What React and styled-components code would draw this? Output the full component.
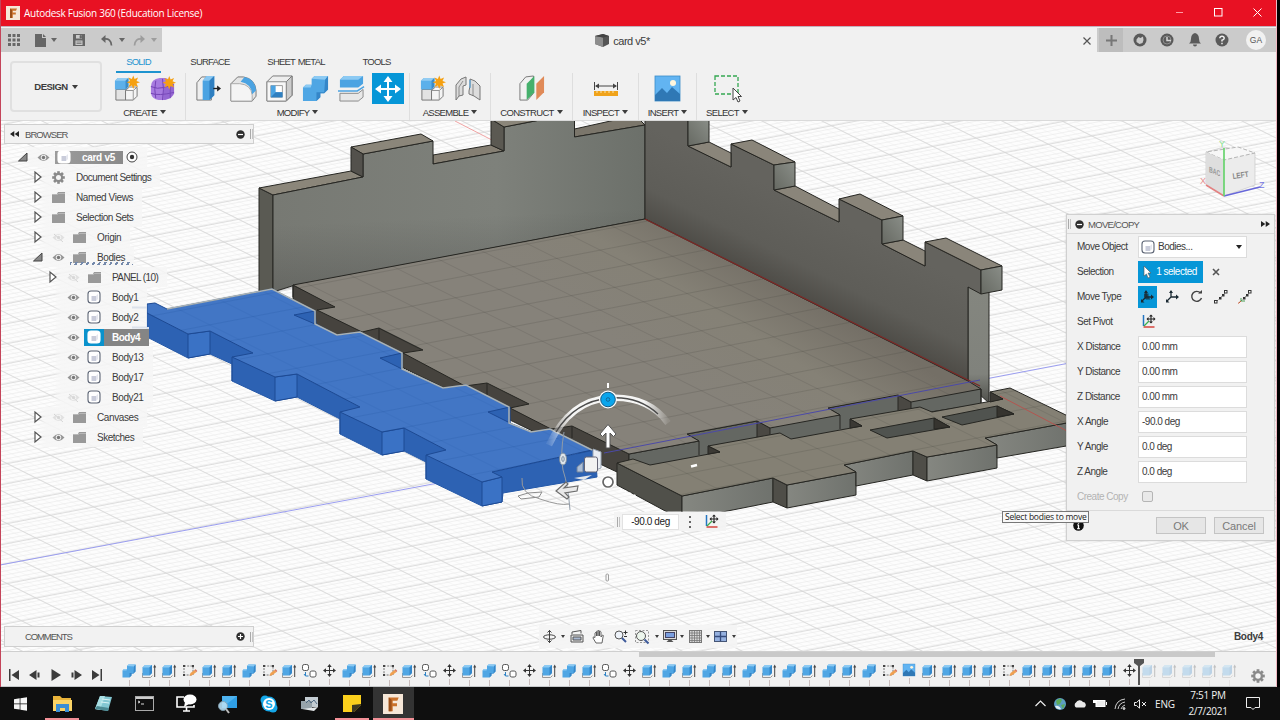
import React from "react";
import styled, { createGlobalStyle, css } from "styled-components";

const Global = createGlobalStyle`
  * { box-sizing: border-box; }
  html, body { margin: 0; padding: 0; background: #000; }
  body { width: 1280px; height: 720px; overflow: hidden; font-family: "Liberation Sans", Arial, sans-serif; font-size: 10px; color: #3c3c3c; }
  svg { display: block; flex: none; overflow: visible; }
`;

/* ---------- frame ---------- */
const Desktop = styled.div`
  width: 1280px; height: 720px; display: grid; grid-template-columns: minmax(0, 1fr); grid-template-rows: 687px 33px; background: #0f0f0f;
`;
const AppWindow = styled.div`
  width: 1277px; display: grid; grid-template-columns: minmax(0, 1fr); grid-template-rows: 27px 25px 69px 530px 36px;
  border-left: 1px solid #c4455a; border-right: 1px solid #f0b8c2; background: #f1f1f1; overflow: hidden;
`;
const WindowWrap = styled.div`background: #000;`;

/* ---------- title bar ---------- */
const TitleBar = styled.header`
  display: flex; align-items: center; background: #e81123; color: #fff; padding: 0 6px 1px 6px; margin: 0 -1px;
  border-bottom: 1px solid #c3b0bc;
`;
const TitleText = styled.span`
  font-family: "Open Sans", "Noto Sans", sans-serif; font-size: 10px; letter-spacing: -0.28px; margin-left: 4px; flex: 1; white-space: nowrap;
`;
const WindowButtons = styled.div`display: flex; gap: 30px; margin-right: 9px; align-items: center;`;

/* ---------- tab strip ---------- */
const TabStrip = styled.div`display: flex; background: #f1f1f1; height: 25px; padding-top: 2px;`;
const QuickBar = styled.div`
  width: 161px; background: #cbcbcb; display: flex; align-items: center; padding-left: 6px; margin-top: -1px;
`;
const Slot = styled.span`
  display: inline-flex; justify-content: center; align-items: center; flex: none;
  width: ${(p) => p.$w}px; height: ${(p) => (p.$h ? p.$h + "px" : "auto")}; opacity: ${(p) => p.$o ?? 1};
  margin-left: ${(p) => (p.$end ? "auto" : 0)};
`;
const DocTab = styled.div`
  flex: 1; display: flex; align-items: center; justify-content: center; position: relative; font-size: 11px; letter-spacing: -0.5px; gap: 4px; padding-right: 14px;
`;
const CloseTab = styled.span`position: absolute; right: 6px; top: 8px;`;
const AccountBar = styled.div`
  width: 179px; background: #cbcbcb; display: flex; align-items: center; margin-top: -1px;
`;
const NewTab = styled.span`
  width: 24px; height: 100%; background: #bdbdbd; display: flex; align-items: center; justify-content: center; margin: 0 3px 0 2px;
`;
const Avatar = styled.span`
  width: 20px; height: 20px; border-radius: 50%; background: #f1f1f1; color: #555; font-size: 8.5px; display: flex; align-items: center; justify-content: center; margin-left: 10px;
`;

/* ---------- ribbon ---------- */
const Ribbon = styled.div`display: flex; background: #f1f1f1; border-bottom: 1px solid #dadada;`;
const DesignButton = styled.button`
  width: 92px; height: 51px; margin: 9px 2px 0 9px; border: 2px solid #e0e0e0; border-radius: 4px; background: #f1f1f1; padding: 0;
  font: bold 9.5px "Liberation Sans", Arial, sans-serif; letter-spacing: -0.5px; color: #3c3c3c; display: flex; align-items: center; justify-content: center; gap: 4px;
`;
const RibbonBody = styled.div`display: flex; flex-direction: column;`;
const Tabs = styled.nav`display: flex; height: 21px; padding-left: 12px;`;
const Tab = styled.span`
  width: ${(p) => p.$w}px; height: 21px; display: flex; justify-content: center; padding-top: 4px; font-size: 9.5px; letter-spacing: -0.8px; word-spacing: 1px; color: #3a3a3a; white-space: nowrap;
  ${(p) => p.$active && css`color: #1d93cf; border-bottom: 2px solid #1d93cf;`}
`;
const Groups = styled.div`display: flex; height: 47px;`;
const Group = styled.section`
  width: ${(p) => p.$w}px; display: flex; flex-direction: column; align-items: center; position: relative;
  border-right: 1px solid ${(p) => (p.$last ? "transparent" : "#dedede")};
`;
const GroupIcons = styled.div`display: flex; height: 31px;`;
const IconCell = styled.span`
  width: 36px; height: 31px; display: flex; align-items: center; justify-content: center;
`;
const ActiveTool = styled.span`width: 32px; height: 31px; background: #0696d7; display: flex; align-items: center; justify-content: center;`;
const GroupLabel = styled.span`
  display: flex; align-items: center; gap: 3px; font-size: 9.5px; letter-spacing: -0.7px; margin-top: 2px; height: 12px; white-space: nowrap; color: #333;
`;
const Caret = styled.i`
  width: 0; height: 0; border: ${(p) => p.$s || 3}px solid transparent; border-top: ${(p) => (p.$s || 3) + 1}px solid ${(p) => p.$c || "#3c3c3c"}; border-bottom: 0; display: inline-block; flex: none;
  margin-left: ${(p) => (p.$end ? "auto" : p.$pull ? "-14px" : 0)};
`;

/* ---------- viewport ---------- */
const Viewport = styled.main`position: relative; background: #fcfcfc; overflow: hidden;`;
const Canvas = styled.svg`position: absolute; left: -1px; top: 0;`;
const LeftDock = styled.aside`
  position: absolute; inset: 3px auto 4px 3px; width: 250px; display: flex; flex-direction: column; justify-content: space-between; align-items: stretch;
`;
const DockBar = styled.div`
  height: ${(p) => p.$h}px; border: 1px solid #cfcfcf; background: #f2f2f2; display: flex; align-items: center; color: #555; font-size: 9.5px; letter-spacing: -0.95px;
`;
const Grip = styled.i`width: 3px; height: 10px; border-left: 1px solid #aaa; border-right: 1px solid #c4c4c4;`;
const Tree = styled.div`display: flex; flex-direction: column; margin-top: 3px;`;
const TreeRow = styled.div`
  height: 20px; display: flex; align-items: center; align-self: flex-start; padding-left: ${(p) => p.$pad}px; padding-right: ${(p) => (p.$tight ? 0 : 9)}px;
  background: linear-gradient(90deg, transparent ${(p) => p.$pad + 10}px, rgba(246,246,246,.86) ${(p) => p.$pad + 18}px);
  white-space: nowrap;
`;
const Label = styled.span`margin-left: ${(p) => p.$ml ?? 7}px; letter-spacing: ${(p) => p.$ls ?? -0.4}px;`;
const RootChip = styled.span`
  height: 13px; width: 68px; background: linear-gradient(90deg, #9b9b9b, #8a8a8a); color: #fff; font-weight: bold; display: flex; align-items: center; padding-left: 2px; margin-left: 2px; margin-right: 3px;
`;
const SelectedChip = styled.span`
  height: 17px; display: flex; align-items: center; background: #858585; color: #fff; font-weight: bold; width: 65px; margin-left: 1px;
`;
const SelectedIcon = styled.span`width: 20px; height: 17px; background: #0a92cc; display: flex; align-items: center; justify-content: center;`;

/* ---------- command panel ---------- */
const Panel = styled.section`
  position: absolute; left: 1065px; top: 93px; width: 209px; height: 327px; background: #f1f1f1; border: 1px solid #d0d0d0; display: flex; flex-direction: column; box-shadow: 0 0 2px rgba(0,0,0,.15);
`;
const PanelHead = styled.div`
  height: 19px; border-bottom: 1px solid #dadada; display: flex; align-items: center; justify-content: space-between; color: #555; padding: 0 4px 0 1px;
`;
const PanelTitle = styled.span`display: flex; align-items: center; gap: 3px; font-size: 9.5px; letter-spacing: -0.7px;`;
const PanelRow = styled.div`
  height: 25px; display: flex; align-items: center; padding-left: 10px; letter-spacing: -0.5px; color: ${(p) => (p.$off ? "#b3b3b3" : "#3c3c3c")};
`;
const RowLabel = styled.span`width: 61px; flex: none; letter-spacing: -0.5px; white-space: nowrap;`;
const Field = styled.span`
  width: 109px; height: 22px; border: 1px solid #dcdcdc; background: #fff; padding: 0 4px 0 3px; display: flex; align-items: center; gap: 3px;
`;
const BodyField = styled(Field)`padding-left: 2px;`;
const Chosen = styled.span`width: 65px; height: 22px; background: #0696d7; color: #fff; display: flex; align-items: center; justify-content: center; gap: 4px;`;
const TypeButton = styled.span`
  width: ${(p) => (p.$on ? 19 : 24.4)}px; height: 22px; display: flex; align-items: center; justify-content: center; background: ${(p) => (p.$on ? "#0696d7" : "transparent")}; margin-right: ${(p) => (p.$on ? 3 : 0)}px;
`;
const CheckBox = styled.i`width: 11px; height: 11px; border: 1px solid #b5b5b5; border-radius: 2px; background: #e9e9e9; margin-left: 4px;`;
const PanelFoot = styled.div`
  flex: 1; border-top: 1px solid #dadada; display: flex; align-items: center; padding: 0 10px 0 6px; margin-top: 1px; justify-content: space-between;
`;
const FootButtons = styled.div`display: flex; gap: 8px;`;
const PanelButton = styled.button`
  width: 50px; height: 17px; padding: 0; border: 1px solid #c4c4c4; background: #e6e6e6; color: #7a7a7a; font: 11px "Liberation Sans", Arial, sans-serif; letter-spacing: -0.1px;
`;
const Hint = styled.span`
  position: absolute; left: 1001px; top: 390px; width: 87px; height: 12px; border: 1px solid #777; background: #f8f8f8; color: #222; font: 8.5px/10px "Open Sans", sans-serif; letter-spacing: -0.25px; padding-left: 2px; white-space: nowrap;
`;
const FloatInput = styled.div`
  position: absolute; left: 613px; top: 391px; height: 19px; display: flex; align-items: center; background: rgba(243,243,243,.92); padding: 0 5px 0 3px; color: #222; letter-spacing: -0.4px;
`;
const FloatField = styled.span`width: 57px; height: 16px; background: #fff; border: 1px solid #e2e2e2; display: flex; align-items: center; justify-content: center; margin-left: 2px;`;
const NavBar = styled.div`
  position: absolute; left: 538px; top: 504px; height: 23px; display: flex; align-items: center; background: rgba(244,244,244,.9);
`;
const StatusName = styled.span`position: absolute; right: 13px; top: 510px; font-weight: bold; letter-spacing: -0.3px; font-size: 10px;`;

/* ---------- timeline ---------- */
const Timeline = styled.footer`background: #f1f1f1; display: flex; flex-direction: column; border-bottom: 1px solid #c6c9cb;`;
const ScrollTrack = styled.div`height: 6px; border-top: 1px solid #cfcfcf;`;
const ScrollThumb = styled.div`height: 5px; width: 576px; margin-left: 638px; background: #c9c9c9;`;
const TimelineRow = styled.div`display: flex; flex: 1; align-items: flex-start;`;
const Playback = styled.div`display: flex; flex: none; width: 118px; padding: 12px 0 0 3px;`;
const Features = styled.div`display: flex; flex: none;`;
const Feature = styled.span`
  width: 20px; height: 29px; display: flex; flex-direction: column; align-items: center; padding-top: 7px; opacity: ${(p) => (p.$off ? 0.28 : 1)};
  &::after { content: ""; width: 1px; height: 6px; margin-top: 2px; background: #c9bdbd; }
`;
const Marker = styled.span`width: 0; height: 29px; display: flex; justify-content: center;`;

/* ---------- taskbar ---------- */
const Taskbar = styled.div`display: flex; background: #0f0f0f; color: #f2f2f2; font-family: "Open Sans", "Noto Sans", sans-serif;`;
const Task = styled.span`
  width: 41.4px; height: 33px; display: flex; align-items: center; justify-content: center; position: relative; background: ${(p) => (p.$active ? "#333" : "transparent")};
  ${(p) => p.$open && css`&::after { content: ""; position: absolute; bottom: 0; height: 2px; left: ${p.$active ? 0 : 4}px; right: ${p.$active ? 0 : 4}px; background: #f29097; }`}
`;
const Tray = styled.div`margin-left: auto; display: flex; align-items: center; padding-right: 15px;`;
const Language = styled(Slot)`font-size: 10px; letter-spacing: -0.2px;`;
const Clock = styled.span`width: 54px; text-align: center; font-size: 10px; line-height: 15.5px; letter-spacing: -0.3px; margin-left: 1px; margin-right: 6px;`;

/* ---------- icon drawings ---------- */
const F = ({ s, bg = "#f6e7d8", c = "#c9712b" }) => (
  <svg width={s} height={s} viewBox="0 0 14 14"><rect width="14" height="14" fill={bg} /><path d="M4 2.5h7l-1 2.2H6.8v1.8h3v2h-3V12H4z" fill={c} /><path d="M4 2.5 6 4v8H4z" fill="#9b4f19" /></svg>
);
const Star = ({ x, y }) => (
  <g transform={`translate(${x} ${y})`}><path d="M0-7 1.4-3.4 5-5 3.4-1.4 7 0 3.4 1.4 5 5 1.4 3.4 0 7-1.4 3.4-5 5-3.4 1.4-7 0-3.4-1.4-5-5-1.4-3.4z" fill="#f5a011" /></g>
);
const NewComponent = () => (
  <svg width="27" height="27" viewBox="0 0 28 28" strokeWidth="1" strokeLinejoin="round">
    <path d="M3 15 3 26h10V15z" fill="#e3e3e3" stroke="#777" /><path d="M13 15v11h8l4-4V13h-8z" fill="#f4f4f4" stroke="#777" />
    <path d="M13 16 17 12.5H25L21 16z" fill="#fff" stroke="#888" /><path d="M21 16v10" stroke="#999" />
    <path d="M2 6 5 3h11v9l-3 3H2z" fill="#5cb0ea" /><path d="M2 6 5 3h11l-3 3z" fill="#93ccf2" /><path d="M13 6l3-3v9l-3 3z" fill="#3b8cc9" /><Star x={21} y={7.5} />
  </svg>
);
const FormTool = () => (
  <svg width="27" height="27" viewBox="0 0 28 28"><path d="M2 12Q2 4 11 3h6q8 2 9 8v8q-1 5-9 7h-7Q3 25 2 19z" fill="#a77be0" /><path d="M2 12q7 3 13 1l11-3M14 4q2 11 0 22M7 6q-2 9 0 18M22 12v12M2 19q8 3 24-1" fill="none" stroke="#7343b4" /><path d="M15 13v13l7-2 4-5v-8z" fill="#7f50c2" opacity=".45" /><Star x={21} y={8} /></svg>
);
const PressPull = () => (
  <svg width="27" height="27" viewBox="0 0 28 28"><path d="M3 8 8 2h10v24H3z" fill="#eee" stroke="#777" /><path d="M9 6 13 1h8v20l-5 5H9z" fill="#4ba3e2" /><path d="M9 6 13 1h8l-5 5z" fill="#88c6f1" /><path d="M16 6l5-5v20l-5 5z" fill="#2f7fc0" /><path d="M20 14h5" stroke="#222" strokeWidth="1.4" /><path d="M24 11l4 3-4 3z" fill="#222" /></svg>
);
const Fillet = () => (
  <svg width="27" height="27" viewBox="0 0 28 28"><path d="M1 9 8 2h6q12 2 13 14v6l-4 5H1z" fill="#e4e4e4" stroke="#777" /><path d="M1 9h9q12 1 13 12v6H1z" fill="#f4f4f4" stroke="#999" strokeWidth=".8" /><path d="M11 7 15 2q11 2 12 14l-4 4Q22 9 11 7z" fill="#4ba3e2" /></svg>
);
const Shell = () => (
  <svg width="27" height="27" viewBox="0 0 28 28"><path d="M1 7 7 1h20v20l-6 6H1z" fill="#eee" stroke="#777" /><path d="M21 7l6-6v20l-6 6z" fill="#ccc" stroke="#777" /><path d="M1 7h20v20H1z" fill="#f7f7f7" stroke="#888" /><path d="M5 11h12v12H5z" fill="#fff" stroke="#999" /><path d="M5 11h5v7h7v5H5z" fill="#4ba3e2" /><path d="M5 23 10 18h7v5z" fill="#2f7fc0" /></svg>
);
const Combine = ({ s = 27 }) => (
  <svg width={s} height={s} viewBox="0 0 28 28"><path d="M1 13 4 10h6V4l3-3h14v14l-4 4h-4v4l-4 4H1z" fill="#4fa6e4" /><path d="M1 13 4 10h6l-1 3zM10 4l3-3h14l-3 4z" fill="#8ccaf3" /><path d="M24 5l3-4v14l-4 4h-4v4l-4 4v-9h8z" fill="#3586c8" /></svg>
);
const Split = () => (
  <svg width="27" height="27" viewBox="0 0 28 28"><path d="M2 5 6 1h20v8l-5 4H2z" fill="#4ba3e2" /><path d="M2 5 6 1h20l-5 4z" fill="#8ccaf3" /><path d="M0 16.5h20L27 12" fill="none" stroke="#4ba3e2" strokeWidth="1.5" /><path d="M2 19h19l5-4v8l-5 4H2z" fill="#e8e8e8" stroke="#888" /></svg>
);
const MoveGlyph = ({ s = 26, c = "#fff" }) => (
  <svg width={s} height={s} viewBox="0 0 26 26" fill={c}><path d="M12 5h2v16h-2zM5 12h16v2H5z" /><path d="M13 0 17.5 6h-9zM13 26 17.5 20h-9zM0 13 6 8.500v9zM26 13 20 8.500v9z" /></svg>
);
const Joint = () => (
  <svg width="26" height="26" viewBox="0 0 26 26" fill="#dcdcdc" stroke="#777"><path d="M1 24V9L6 3l5-2v8l-3 1v9l-4 1z" /><path d="M4 20V11l4-6" fill="none" strokeWidth=".8" /><path d="M25 24V10L20 5l-5-2v7l-1 5v3l5 2z" /><path d="M18 8v12" strokeWidth=".8" /><path d="M15 4v8" stroke="#4ba3e2" /></svg>
);
const Construct = () => (
  <svg width="27" height="27" viewBox="0 0 28 28"><path d="M2 9 8 2l8-1v18l-6 7H2z" fill="#f1f1f1" stroke="#777" /><path d="M9 9 17 1v17l-8 8z" fill="#45b06c" /><path d="M19 9l8-8v17l-8 8z" fill="#e08a58" /></svg>
);
const Inspect = () => (
  <svg width="26" height="26" viewBox="0 0 26 26"><rect x="1" y="15" width="24" height="5" fill="#f0a31b" /><path d="M4 15v2M8 15v2M12 15v2M16 15v2M20 15v2" stroke="#fff3d0" strokeWidth=".8" /><path d="M1.500 6v8M24.500 6v8M3 10h20" stroke="#444" /><path d="M2 10l4-2.500v5zM24 10l-4-2.500v5z" fill="#444" /></svg>
);
const Picture = ({ s = 25 }) => (
  <svg width={s} height={s} viewBox="0 0 25 25"><rect width="25" height="25" fill="#62b4f2" stroke="#3b8cc9" strokeWidth=".8" /><circle cx="18" cy="7" r="3" fill="#fff6dd" /><path d="M0 19 7 12l5 5 5-6 8 7v7H0z" fill="#2f78b5" /></svg>
);
const SelectTool = () => (
  <svg width="28" height="30" viewBox="0 0 28 30"><rect x="2" y="2" width="23" height="18" fill="none" stroke="#35a852" strokeWidth="1.300" strokeDasharray="4 2" /><path d="M20 14v12l3-2.500 2 4.500 2-1-2-4.500h3.500z" fill="#fff" stroke="#444" /></svg>
);
const Eye = ({ off }) => (
  <svg width="13" height="9" viewBox="0 0 13 9" opacity={off ? 0.22 : 1}><path d="M.5 4.500Q6.500-2.500 12.500 4.500 6.500 11.500.5 4.500z" fill="#959595" /><circle cx="6.500" cy="4.500" r="2.700" fill="#eee" /><circle cx="6.500" cy="4.500" r="1.700" fill="#777" />{off && <path d="M2 1l9 8" stroke="#666" />}</svg>
);
const Folder = () => <svg width="13" height="11" viewBox="0 0 13 11"><path d="M0 2h5l1-2h7v11H0z" fill="#999" /><path d="M0 2.500h5.500l1-1H13" stroke="#c4c4c4" strokeWidth=".7" fill="none" /></svg>;
const BodyIcon = ({ sel }) => <svg width="14" height="14" viewBox="0 0 14 14"><rect x="1" y="1" width="12" height="12" rx="3" fill="#fff" stroke={sel ? "#fff" : "#5d6575"} strokeWidth="1.100" /><path d="M4.500 6h4.500v5h-4.500z" fill="#c9ccda" /><path d="M9 6l2-2v5l-2 2z" fill="#e4e6ee" /></svg>;
const Gear = ({ s = 13, c = "#8a8a8a" }) => (
  <svg width={s} height={s} viewBox="-7 -7 14 14"><g fill={c}>{[0, 45, 90, 135].map((a) => <rect key={a} x="-1.400" y="-6.800" width="2.800" height="13.600" transform={`rotate(${a})`} />)}<circle r="5" /></g><circle r="2.700" fill="#f4f4f4" /></svg>
);
const Arrow = ({ open }) => open
  ? <svg width="10" height="10" viewBox="0 0 10 10"><path d="M9 1v8H.5z" fill="#888" stroke="#444" /></svg>
  : <svg width="8" height="12" viewBox="0 0 8 12"><path d="M1 1v10l6-5z" fill="#fff" stroke="#555" strokeWidth="1.200" /></svg>;
const Dot = ({ plus }) => <svg width="9" height="9" viewBox="0 0 9 9"><circle cx="4.500" cy="4.500" r="4.200" fill="#2e2e2e" /><path d={plus ? "M2 4.500h5M4.500 2v5" : "M2 4.500h5"} stroke="#fff" strokeWidth="1.200" /></svg>;
const Chevrons = ({ back }) => <svg width="9" height="6" viewBox="0 0 9 6" fill="#222"><path d={back ? "M4.300 0v6L0 3zM9 0v6L4.700 3z" : "M0 0v6l4.300-3zM4.700 0v6L9 3z"} /></svg>;
const Pivot = () => (
  <svg width="13" height="13" viewBox="0 0 13 13"><path d="M1.500 0v11" stroke="#2476c2" strokeWidth="1.500" /><path d="M1.500 12h11" stroke="#d6443c" strokeWidth="1.500" /><path d="M2 11l5-5" stroke="#3eae4e" strokeWidth="1.200" /><path d="M9 .5v7M5.500 4h7" stroke="#222" strokeWidth="1.100" /><path d="M9-.5l2 2H7zM9 8.500l2-2H7zM4.500 4l2-2v4zM13.500 4l-2-2v4z" fill="#222" /></svg>
);
const FreeMove = ({ all }) => (
  <svg width="13" height="13" viewBox="0 0 13 13"><path d="M5 1v6h7M5 7l-4 4" fill="none" stroke="#1b2a33" strokeWidth="1.300" /><path d="M3 3l2-3 2 3zM10 4.500l3 2.500-3 2.500zM0 9v3.500h3.500z" fill="#1b2a33" />{all && <path d="M3 7V3.500h4.500V7l2 2.500H5" fill="#1b2a33" opacity=".75" />}</svg>
);
const RotateIcon = () => <svg width="13" height="13" viewBox="0 0 13 13"><path d="M10.500 3A5 5 0 1 0 11.500 8" fill="none" stroke="#444" strokeWidth="1.400" /><path d="M8 3.500h4V0z" fill="#444" /></svg>;
const PointMove = ({ axes }) => (
  <svg width="14" height="14" viewBox="0 0 14 14"><path d="M3 11 11 3" stroke="#555" strokeDasharray="2 1" strokeWidth=".8" /><rect x="10.500" y=".5" width="2.500" height="2.500" fill="#fff" stroke="#333" /><path d="M8 4h2.500v2.500H8zM5 7h2.500v2.500H5z" fill="#333" />{axes ? <path d="M3 8v3h4M3 11l-2 2" fill="none" stroke="#4d9f55" /> : <rect x=".5" y="10.500" width="2.500" height="2.500" fill="#fff" stroke="#333" />}{axes && <path d="M0 13.500l3-2.500" stroke="#d65a3c" />}</svg>
);
const Extrude = () => (
  <svg width="14" height="14" viewBox="0 0 14 14"><path d="M.5 9v4.500h8l2-2" fill="#eee" stroke="#999" /><path d="M.5 3.500 3 1h7v8l-2.500 2.500h-7z" fill="#4fa6e4" /><path d="M.5 3.500 3 1h7L7.500 3.500z" fill="#8ccaf3" /><path d="M7.500 3.500 10 1v8l-2.500 2.500z" fill="#3586c8" /><path d="M12.700 2v11" stroke="#444" /><path d="M11.200 3.500l1.500-3 1.500 3z" fill="#444" /></svg>
);
const SketchIcon = () => (
  <svg width="14" height="14" viewBox="0 0 14 14"><path d="M2 2h9v9H2z" fill="none" stroke="#777" strokeDasharray="2 1.200" /><path d="M1 1h2v2H1zM10 1h2v2h-2zM1 10h2v2H1z" fill="#444" /><path d="M7.500 12l1-3 4-3 2 2-4 3z" fill="#f0a050" /><path d="M12.500 6l2 2 .8-1-1.600-1.700z" fill="#d46b52" /></svg>
);
const Pattern = () => (
  <svg width="14" height="14" viewBox="0 0 14 14" fill="#fff" stroke="#555"><rect x=".5" y=".5" width="6" height="6" rx="1.800" /><rect x="8" y="7" width="6" height="6" rx="1.800" /><path d="M3.500 8v4h3M2 10l1.500 2" stroke="#2f82c4" fill="none" /></svg>
);
const featureIcons = { C: <Combine s={14} />, E: <Extrude />, S: <SketchIcon />, J: <Pattern />, M: <MoveGlyph s={13} c="#333" />, I: <Picture s={12} /> };

const Play = ({ kind }) => (
  <svg width="12" height="12" viewBox="0 0 12 12" fill="#3c3c3c">
    {kind === "first" && <path d="M1 0h1.500v12H1zM11 1v10L3.500 6z" />}
    {kind === "prev" && <path d="M7.500 1v10L0 6zM8.500 3.500h2v5h-2z" />}
    {kind === "play" && <path d="M1.500 0v12L11 6z" />}
    {kind === "next" && <path d="M4.500 1v10L12 6zM1.500 3.500h2v5h-2z" />}
    {kind === "last" && <path d="M9.500 0H11v12H9.500zM1 1v10L8.500 6z" />}
  </svg>
);

/* ---------- 3D scene ---------- */
const pts = (a) => a.map((p) => p.join(",")).join(" ");
const Poly = ({ p, f, s = "#262622", w = 1 }) => <polygon points={pts(p)} fill={f} stroke={s} strokeWidth={w} strokeLinejoin="round" />;

const gridPath = (fall, start, end, step) => {
  let d = "";
  for (let c = start; c < end; c += step) d += `M0 ${c.toFixed(1)}L1280 ${(c + fall).toFixed(1)}`;
  return d;
};
const GRID = {
  aMinor: gridPath(640, -560, 680, 6), aMajor: gridPath(640, -560, 680, 30),
  bMinor: gridPath(-245, 120, 920, 4), bMajor: gridPath(-245, 125, 920, 20),
};

const FLOOR = [[645, 219], [968, 381], [981, 389], [911, 402], [898, 395], [828, 408], [840, 415], [770, 428], [757, 421], [687, 434], [699, 441], [629, 454], [572, 426], [551, 429], [510, 408], [529, 404], [487, 383], [465, 386], [403, 353], [423, 350], [379, 328], [362, 332], [317, 310], [335, 307], [293, 285]];
const SLAB = [[617, 463], [633, 459], [650, 465], [720, 452], [708, 446], [780, 433], [791, 439], [862, 426], [850, 419], [920, 407], [932, 412], [1003, 399], [990, 392], [1010, 388], [1072, 418], [1072, 422], [985, 438], [997, 445], [927, 457], [913, 451], [844, 465], [856, 472], [787, 485], [773, 478], [682, 496]];
const BLUE_TOP = [[147, 304], [155, 303], [167, 309], [272, 289], [315, 311], [316, 324], [337, 335], [360, 332], [402, 353], [402, 369], [443, 388], [466, 385], [509, 407], [510, 423], [531, 432], [550, 429], [592, 450], [492, 472], [502, 477], [482, 482], [426, 455], [446, 450], [404, 428], [382, 432], [340, 412], [360, 407], [297, 374], [275, 377], [232, 357], [253, 353], [210, 331], [188, 334], [147, 313]];
const BLUE_SIDE = [[147, 313], [188, 334], [210, 331], [253, 353], [275, 377], [297, 374], [360, 407], [382, 432], [404, 428], [446, 450], [482, 482], [492, 472], [595, 450], [597, 477], [503, 493], [502, 502], [482, 506], [426, 479], [426, 462], [404, 451], [382, 455], [340, 434], [340, 419], [297, 397], [275, 401], [232, 381], [232, 364], [210, 354], [188, 358], [147, 337]];

const Scene = () => (
  <Canvas width="1280" height="530" viewBox="0 121 1280 530">
    <defs>
      <clipPath id="model"><rect x="0" y="121" width="1280" height="390.500" /></clipPath>
      <clipPath id="floor"><polygon points={pts(FLOOR)} /></clipPath>
      <clipPath id="slab"><polygon points={pts(SLAB)} /></clipPath>
      <clipPath id="blue"><polygon points={pts(BLUE_TOP)} /></clipPath>
      <linearGradient id="wl" x1="0" x2="1"><stop offset="0" stopColor="#777973" /><stop offset=".6" stopColor="#7e817b" /><stop offset="1" stopColor="#6c706a" /></linearGradient>
      <linearGradient id="wls" x1=".45" y1="0" x2=".55" y2="1"><stop offset=".55" stopColor="#333" stopOpacity="0" /><stop offset="1" stopColor="#333" stopOpacity=".28" /></linearGradient>
      <linearGradient id="wr" gradientUnits="userSpaceOnUse" x1="830" y1="215" x2="788" y2="300"><stop offset="0" stopColor="#64635e" /><stop offset=".6" stopColor="#5e5d58" /><stop offset="1" stopColor="#4a4843" /></linearGradient>
      <linearGradient id="fl" gradientUnits="userSpaceOnUse" x1="800" y1="290" x2="725" y2="410"><stop offset="0" stopColor="#746f66" /><stop offset=".45" stopColor="#858176" /><stop offset="1" stopColor="#86827a" /></linearGradient>
      <linearGradient id="face" x1="0" x2="1"><stop offset="0" stopColor="#858781" /><stop offset="1" stopColor="#6f726d" /></linearGradient>
      <linearGradient id="tooth" x1="0" x2="1" y1="1" y2="0"><stop offset="0" stopColor="#666962" /><stop offset="1" stopColor="#8a8e88" /></linearGradient>
      <linearGradient id="pillar" x1="0" x2="0" y1="0" y2="1"><stop offset="0" stopColor="#84867f" /><stop offset=".75" stopColor="#80827c" /><stop offset="1" stopColor="#4f504b" /></linearGradient>
      <linearGradient id="arc" gradientUnits="userSpaceOnUse" x1="548" y1="0" x2="668" y2="0"><stop offset="0" stopColor="#fff" stopOpacity=".1" /><stop offset=".2" stopColor="#fff" /><stop offset=".8" stopColor="#fff" /><stop offset="1" stopColor="#fff" stopOpacity=".1" /></linearGradient>
    </defs>
    <rect y="121" width="1280" height="530" fill="#fdfdfd" />
    <g fill="none">
      <path d={GRID.aMinor} stroke="#f3f3f3" strokeWidth=".7" /><path d={GRID.bMinor} stroke="#ebebeb" strokeWidth=".7" />
      <path d={GRID.aMajor} stroke="#d4d4d4" strokeWidth=".8" /><path d={GRID.bMajor} stroke="#d6d6d6" strokeWidth=".8" />
      <path d="M455 121 645 219" stroke="#f0a3a3" /><path d="M0 565 620 449M980 380 1080 361" stroke="#9a9df0" />
    </g>
    <g clipPath="url(#model)">
      {/* left wall */}
      <Poly p={[[259, 188], [273, 195], [273, 300], [259, 296]]} f="#5a5a53" />
      <Poly p={[[259, 188], [351, 171], [363, 177], [273, 195]]} f="#8b867a" />
      <Poly p={[[433, 155], [491, 145], [504, 151], [433, 164]]} f="#857f73" />
      <Poly p={[[574.5, 129], [615, 120], [640, 120], [645, 125], [574.5, 137]]} f="#7b766b" />
      <polygon points={pts([[273, 195], [363, 177], [363, 154], [433, 141], [433, 164], [504, 151], [504, 127], [540, 120], [574.5, 120], [574.5, 137], [645, 125], [645, 219], [292, 286], [273, 292]])} fill="url(#wl)" stroke="#262622" />
      <polygon points={pts([[273, 195], [645, 125], [645, 219], [273, 292]])} fill="url(#wls)" />
      <Poly p={[[351, 147], [421, 134], [433, 141], [363, 154]]} f="#8b867a" />
      <Poly p={[[351, 147], [363, 154], [363, 177], [351, 171]]} f="#53514c" />
      <Poly p={[[491, 119], [504, 127], [504, 151], [491, 145]]} f="#5b5952" />
      <Poly p={[[491, 119], [545, 119], [504, 127]]} f="#8b867a" />
      {/* right wall */}
      <Poly p={[[968, 287], [989, 287], [989, 403], [968, 384]]} f="url(#pillar)" />
      <polygon points={pts([[645, 119], [688, 119], [688, 146], [731, 167], [731, 144], [774, 165], [774, 190], [839, 222], [839, 199], [882, 220], [882, 244], [925, 266], [925, 242], [981, 270], [981, 294], [968, 287], [968, 382], [645, 219]])} fill="url(#wr)" stroke="#262622" />
      {[[[688, 146], [709, 142], [731, 153], [731, 167]], [[774, 190], [795, 186], [839, 209], [839, 222]], [[882, 244], [903, 240], [925, 251], [925, 266]],
        [[731, 144], [752, 140], [795, 162], [774, 165]], [[839, 199], [860, 194], [903, 216], [882, 220]], [[925, 242], [946, 238], [1002, 266], [981, 270]]].map((p, i) => <Poly key={i} p={p} f="#8a857a" />)}
      {[[[688, 119], [709, 119], [709, 142], [688, 146]], [[774, 165], [795, 162], [795, 186], [774, 190]], [[882, 220], [903, 216], [903, 240], [882, 244]], [[981, 270], [1002, 266], [1002, 290], [981, 294]]].map((p, i) => <Poly key={i} p={p} f="url(#tooth)" />)}
      {/* base plate */}
      <Poly p={[[293, 285], [629, 454], [629, 475], [617, 472], [600, 464], [293, 314]]} f="#46433e" />
      <Poly p={[[629, 454], [699, 441], [687, 434], [757, 421], [840, 415], [828, 408], [898, 395], [981, 389], [981, 404], [930, 412], [850, 432], [700, 460], [629, 475]]} f="#646762" />
      <Poly p={[[757, 421], [770, 428], [770, 440], [757, 440]]} f="#4a4843" /><Poly p={[[898, 395], [911, 402], [911, 415], [898, 415]]} f="#4a4843" />
      <path d="M699 441v14M840 415v14M981 389v14M293 285v12M379 328v12M487 383v12M572 426v12" stroke="#262622" />
      <Poly p={FLOOR} f="url(#fl)" />
      <g clipPath="url(#floor)" fill="none" stroke="#3d3a33"><path d={GRID.aMajor} opacity=".15" /><path d={GRID.bMajor} opacity=".17" /></g>
      <path d="M645 219 980 386" stroke="#7c2926" strokeWidth="1.300" />
      <path d="M604 453 980 380" stroke="#4c4aa8" strokeWidth="1" />
      {/* hinged slab */}
      <Poly p={[[617, 463], [682, 496], [682, 520], [617, 485]]} f="#50504a" />
      <Poly p={[[682, 496], [773, 478], [773, 502], [682, 520]]} f="url(#face)" />
      <Poly p={[[773, 478], [787, 485], [787, 508], [773, 502]]} f="#4f4e48" />
      <Poly p={[[787, 485], [856, 472], [856, 495], [787, 508]]} f="url(#face)" />
      <Poly p={[[844, 465], [913, 451], [913, 475], [856, 486], [856, 472]]} f="url(#face)" />
      <Poly p={[[913, 451], [927, 457], [927, 481], [913, 475]]} f="#4f4e48" />
      <Poly p={[[927, 457], [997, 445], [997, 468], [927, 481]]} f="url(#face)" />
      <Poly p={[[985, 438], [1072, 422], [1072, 445], [997, 458], [997, 445]]} f="url(#face)" />
      <Poly p={SLAB} f="#848074" />
      <g clipPath="url(#slab)" fill="none" stroke="#3d3a33"><path d={GRID.aMajor} opacity=".15" /><path d={GRID.bMajor} opacity=".17" /></g>
      <Poly p={[[708, 446], [720, 452], [708, 454]]} f="#3b3934" /><Poly p={[[850, 419], [862, 426], [850, 428]]} f="#3b3934" /><Poly p={[[990, 392], [1003, 399], [990, 402]]} f="#3b3934" />
      <Poly p={[[870, 430], [934, 418], [950, 427], [887, 438]]} f="#50534f" /><Poly p={[[934, 418], [950, 427], [934, 429]]} f="#36342f" />
      <Poly p={[[942, 417], [997, 406], [1014, 414], [962, 425]]} f="#50534f" /><Poly p={[[997, 406], [1014, 414], [997, 417]]} f="#36342f" />
      <path d="M1000 396 1067 431" stroke="#b35550" />
      {/* selected body */}
      <path d="M132 307.500h18M132 327.500h16" stroke="#3d66a8" strokeWidth="2" />
      <Poly p={BLUE_SIDE} f="#2d62b3" s="#2458a8" />
      {[[[188, 334], [210, 331], [210, 354], [188, 358]], [[275, 377], [297, 374], [297, 397], [275, 401]], [[382, 432], [404, 428], [404, 451], [382, 455]], [[482, 482], [502, 477], [502, 502], [482, 506]]].map((p, i) => <Poly key={i} p={p} f="#3a72c5" s="#1d4a94" />)}
      <path d="M232 357v24M340 412v22M426 455v24" stroke="#1d4a94" />
      <Poly p={BLUE_TOP} f="#4276c5" s="#1d4a94" />
      <g clipPath="url(#blue)" fill="none" stroke="#174490"><path d={GRID.aMajor} opacity=".1" /><path d={GRID.bMajor} opacity=".14" /></g>
      <path d="M294 315 315 311v13zM380 358l22-5v16zM488 412l22-5v16z" fill="#2d62b3" stroke="#1d4a94" />
      <path d="M167 309 272 289 315 311V324L337 335 360 332 402 353V369L443 388 466 385 509 407V423L531 432 550 429 592 450" fill="none" stroke="#aab2b4" strokeWidth="1.500" />
    </g>
    {/* manipulator */}
    <g fill="none">
      <path d="M549 445Q570 400 610 398 648 396 668 423" stroke="url(#arc)" strokeWidth="6.500" opacity=".92" />
      <path d="M556 432Q575 401 610 398 638 396 658 414" stroke="#4b4b4b" strokeWidth="1.400" />
      <path d="M564 432Q560 455 563 470 568 485 570 510" stroke="#8f9ba8" />
      <path d="M522 478Q520 494 540 499 560 506 569 504" stroke="#999" />
      <path d="M518 496l10-3 14-1-3 5-18 2z" stroke="#8b8b8b" /><path d="M608 383v5" stroke="#fff" strokeWidth="2" />
      <circle cx="608" cy="399.500" r="9" fill="#fff" /><circle cx="608" cy="399.500" r="7.300" fill="#0aa5ec" stroke="#155b86" /><circle cx="608" cy="399.500" r="1.800" stroke="#155b86" strokeWidth=".8" />
      <path d="M608 424.500 616 434 613.500 436.500 610 433V448H606V433L602.500 436.500 600 434z" fill="#fff" stroke="#555" />
      <ellipse cx="563" cy="459" rx="3.500" ry="6" fill="#dfe5ea" stroke="#7d8ea1" /><ellipse cx="563" cy="459" rx="1.200" ry="2.500" stroke="#7d8ea1" />
      <path d="M593 449 601 452V468L593 471z" fill="#e9edf3" stroke="#9ba6b5" /><rect x="584.500" y="457" width="13" height="15" rx="2" fill="#f2f2f2" stroke="#667" /><path d="M577 467 583 462V472H577z" fill="#aebfd6" stroke="#6e819c" />
      <path d="M574 478l18-3-8 5z" fill="#e5e8ec" />
      <path d="M556 491 566 482 568 484 564 488 578 486 577 491 565 493 569 497 567 499z" fill="#e9e9e9" stroke="#6d6d6d" strokeWidth="1.200" />
      <circle cx="608" cy="482" r="7" fill="#fff" /><circle cx="608" cy="482" r="5" fill="#fff" stroke="#666" strokeWidth="1.700" />
      <path d="M620 489 638 497" stroke="#fff" strokeWidth="2" strokeDasharray="2 3" /><path d="M691 466.500l6-1.500" stroke="#fff" strokeWidth="2.500" />
      <rect x="606" y="574" width="2.500" height="7" rx="1" stroke="#888" strokeWidth=".8" />
    </g>
    {/* view cube */}
    <g>
      <path d="M1206 152 1224 147 1255 153V185L1224 196 1206 185z" fill="#ececec" stroke="#c5c5c5" strokeWidth=".6" />
      <path d="M1206 152 1224 160 1255 153 1238 147z" fill="#f7f7f7" stroke="#b5b5b5" strokeDasharray="4 2" /><path d="M1206 152 1224 160V196L1206 185z" fill="#dedede" />
      <path d="M1206 185 1224 196" stroke="#e38181" strokeWidth="1.500" /><path d="M1224 196 1260 187" stroke="#6767d9" strokeWidth="1.500" /><path d="M1224 148V196" stroke="#68d46e" strokeWidth="1.700" />
      <g fontFamily="Liberation Sans" fontSize="9"><text x="1219" y="147" fill="#8ae08e">Y</text><text x="1200" y="184" fill="#e58f8f">X</text><text x="1259" y="188" fill="#7777e2">Z</text>
        <text transform="translate(1233 179) rotate(-8) scale(.8 1)" fontSize="8" fontWeight="bold" fill="#868686">LEFT</text><text transform="translate(1209 172) skewY(22) scale(.65 1)" fontSize="8" fontWeight="bold" fill="#999">BAC</text></g>
    </g>
  </Canvas>
);

/* ---------- data ---------- */
const groups = [
  { name: "CREATE", w: 82, icons: [<NewComponent />, <FormTool />] },
  { name: "MODIFY", w: 224, icons: [<PressPull />, <Fillet />, <Shell />, <Combine />, <Split />, <ActiveTool><MoveGlyph /></ActiveTool>] },
  { name: "ASSEMBLE", w: 81, icons: [<NewComponent />, <Joint />] },
  { name: "CONSTRUCT", w: 82, icons: [<Construct />] },
  { name: "INSPECT", w: 66, icons: [<Inspect />] },
  { name: "INSERT", w: 58, icons: [<Picture />] },
  { name: "SELECT", w: 61, icons: [<SelectTool />] },
];
const tree = [
  { t: "Document Settings", lvl: 1, icon: <Gear />, ls: -0.54 },
  { t: "Named Views", lvl: 1, icon: <Folder /> },
  { t: "Selection Sets", lvl: 1, icon: <Folder />, ls: -0.47 },
  { t: "Origin", lvl: 1, eye: "off", icon: <Folder /> },
  { t: "Bodies", lvl: 1, eye: "on", open: true, icon: <Folder />, drop: true },
  { t: "PANEL (10)", lvl: 2, eye: "off", icon: <Folder />, ls: -0.6 },
  { t: "Body1", lvl: 2, eye: "on", leaf: true },
  { t: "Body2", lvl: 2, eye: "on", leaf: true },
  { t: "Body4", lvl: 2, eye: "on", leaf: true, sel: true },
  { t: "Body13", lvl: 2, eye: "on", leaf: true },
  { t: "Body17", lvl: 2, eye: "on", leaf: true },
  { t: "Body21", lvl: 2, eye: "off", leaf: true },
  { t: "Canvases", lvl: 1, eye: "off", icon: <Folder /> },
  { t: "Sketches", lvl: 1, eye: "on", icon: <Folder />, ls: -0.5 },
];
const fields = [["X Distance", "0.00 mm"], ["Y Distance", "0.00 mm"], ["Z Distance", "0.00 mm"], ["X Angle", "-90.0 deg"], ["Y Angle", "0.0 deg"], ["Z Angle", "0.0 deg"]];
const history = "CEESEECSEJMCESEJMECJMECEJMECECECECECECSIEEEESEEEEEM".split("");

const DropLine = styled.span`
  display: flex; align-items: center; height: 18px; margin-right: -8px; padding-right: 8px; position: relative;
  ${(p) => p.$on && css`&::after { content: ""; position: absolute; left: 2px; right: 0; bottom: 1px; height: 3px; background: repeating-linear-gradient(120deg, #7489ab 0 2px, transparent 2px 5px); }`}
`;

const Browser = () => (
  <LeftDock>
    <div>
      <DockBar $h={20}>
        <Slot $w={18}><Chevrons back /></Slot><Label $ml={2} $ls={-0.95}>BROWSER</Label><Slot $w={19} $end><Dot /></Slot><Grip />
      </DockBar>
      <Tree>
        <TreeRow $pad={9}>
          <Slot $w={20}><Arrow open /></Slot><Slot $w={20}><Eye /></Slot>
          <RootChip><BodyIcon sel /><Label $ml={11} $ls={-0.3}>card v5</Label></RootChip>
          <svg width="12" height="12" viewBox="0 0 12 12"><circle cx="6" cy="6" r="5" fill="#fff" stroke="#444" /><circle cx="6" cy="6" r="2.200" fill="#333" /></svg>
        </TreeRow>
        {tree.map((n) => (
          <TreeRow key={n.t} $pad={n.lvl === 1 ? 24 : 39} $tight={n.sel}>
            <Slot $w={20}>{!n.leaf && <Arrow open={n.open} />}</Slot>
            {n.eye && <Slot $w={20}><Eye off={n.eye === "off"} /></Slot>}
            {n.sel ? (
              <SelectedChip><SelectedIcon><BodyIcon sel /></SelectedIcon><Label $ml={8} $ls={-0.5}>{n.t}</Label></SelectedChip>
            ) : (
              <DropLine $on={n.drop}><Slot $w={n.eye ? 22 : 20}>{n.leaf ? <BodyIcon /> : n.icon}</Slot><Label $ml={n.eye ? 7 : 8} $ls={n.ls}>{n.t}</Label></DropLine>
            )}
          </TreeRow>
        ))}
      </Tree>
    </div>
    <DockBar $h={21}><Label $ml={20} $ls={-1.1}>COMMENTS</Label><Slot $w={19} $end><Dot plus /></Slot><Grip /></DockBar>
  </LeftDock>
);

const MovePanel = () => (
  <Panel>
    <PanelHead><PanelTitle><Grip /><Slot $w={11}><Dot /></Slot><span>MOVE/COPY</span></PanelTitle><Chevrons /></PanelHead>
    <PanelRow><RowLabel>Move Object</RowLabel><BodyField><BodyIcon />Bodies...<Caret $end $c="#222" /></BodyField></PanelRow>
    <PanelRow><RowLabel>Selection</RowLabel><Chosen><svg width="8" height="12" viewBox="0 0 8 12"><path d="M0 0v10l2.500-2L4 12l2-1-2-4h3z" fill="#fff" stroke="#555" strokeWidth=".6" /></svg>1 selected</Chosen><Slot $w={26}><svg width="8" height="8" viewBox="0 0 8 8"><path d="M1 1l6 6M7 1 1 7" stroke="#555" strokeWidth="1.600" /></svg></Slot></PanelRow>
    <PanelRow><RowLabel>Move Type</RowLabel><TypeButton $on><FreeMove all /></TypeButton><TypeButton><FreeMove /></TypeButton><TypeButton><RotateIcon /></TypeButton><TypeButton><PointMove /></TypeButton><TypeButton><PointMove axes /></TypeButton></PanelRow>
    <PanelRow><RowLabel>Set Pivot</RowLabel><Slot $w={20}><Pivot /></Slot></PanelRow>
    {fields.map(([k, v]) => <PanelRow key={k}><RowLabel>{k}</RowLabel><Field>{v}</Field></PanelRow>)}
    <PanelRow $off><RowLabel>Create Copy</RowLabel><CheckBox /></PanelRow>
    <PanelFoot>
      <svg width="11" height="11" viewBox="0 0 11 11"><circle cx="5.500" cy="5.500" r="5.300" fill="#111" /><path d="M5.500 2v1.700M5.500 4.700v4M4.200 8.700h2.600M4.300 4.900h1.200" stroke="#fff" strokeWidth="1.300" /></svg>
      <FootButtons><PanelButton>OK</PanelButton><PanelButton>Cancel</PanelButton></FootButtons>
    </PanelFoot>
  </Panel>
);

const Navigation = () => (
  <NavBar>
    <Slot $w={20}><svg width="13" height="13" viewBox="0 0 13 13"><ellipse cx="6.500" cy="7" rx="6" ry="2.200" fill="none" stroke="#444" /><path d="M6.500 0v13M4.500 2.500l2-2 2 2M4.500 10.500l2 2 2-2" stroke="#444" fill="none" /></svg></Slot><Slot $w={8}><Caret $s={2.5} /></Slot>
    <Slot $w={20}><svg width="14" height="13" viewBox="0 0 14 13"><path d="M1 5h12v7H1z" fill="#e8e8e8" stroke="#555" /><path d="M3 7h8v3H3z" fill="#a9b8d0" stroke="#555" /><path d="M2 4V2l9-1.500v3" fill="none" stroke="#555" /></svg></Slot>
    <Slot $w={24}><svg width="14" height="14" viewBox="0 0 14 14"><path d="M4 13 1 8q0-2 2-.5V3q1-1.500 1.500 0V6 1.500q1-1.500 1.500 0V6 1q1-1.500 1.500 0v5V2q1-1.500 1.500 0v5l1.500-2q1.500 0 .5 2L10 13z" fill="#fff" stroke="#555" strokeWidth=".9" /></svg></Slot>
    <Slot $w={20}><svg width="14" height="13" viewBox="0 0 14 13"><circle cx="5" cy="5" r="4" fill="#eef3fa" stroke="#555" /><path d="M8 8l4 4" stroke="#3d5a9a" strokeWidth="2" /><path d="M9.500 2.500h4M11.500.5v4M10 6.500h3" stroke="#333" /></svg></Slot>
    <Slot $w={22}><svg width="15" height="14" viewBox="0 0 15 14"><rect x=".5" y=".5" width="13" height="12" fill="none" stroke="#999" strokeDasharray="2 1.500" /><circle cx="6" cy="6" r="4.500" fill="#edf6ed" stroke="#555" /><path d="M9.500 9.500l4 4" stroke="#3d5a9a" strokeWidth="2" /></svg></Slot><Slot $w={7}><Caret $s={2.5} /></Slot>
    <Slot $w={19}><svg width="14" height="13" viewBox="0 0 14 13"><rect x=".5" y=".5" width="13" height="9" fill="#ddd" stroke="#555" /><rect x="2.500" y="2.500" width="9" height="5" fill="#7ba0e0" stroke="#446" /><path d="M3.500 12h7l-2-2h-3z" fill="#555" /></svg></Slot><Slot $w={6}><Caret $s={2.5} /></Slot>
    <Slot $w={21}><svg width="13" height="13" viewBox="0 0 13 13"><rect x=".5" y=".5" width="12" height="12" fill="#d9d9d9" stroke="#777" /><path d="M3 0v13M5.500 0v13M8 0v13M10.500 0v13M0 3h13M0 5.500h13M0 8h13M0 10.500h13" stroke="#777" strokeWidth=".8" /></svg></Slot><Slot $w={4}><Caret $s={2.5} /></Slot>
    <Slot $w={21}><svg width="13" height="11" viewBox="0 0 13 11"><rect x=".5" y=".5" width="12" height="10" fill="#94b0df" stroke="#455575" /><path d="M6.500 1v9M1 5.500h11" stroke="#344a7c" strokeWidth="1.300" /></svg></Slot><Slot $w={6}><Caret $s={2.5} /></Slot>
  </NavBar>
);

const taskIcons = [
  { i: <svg width="15" height="14" viewBox="0 0 15 14" fill="#f5f5f5"><path d="M1 2.200 6.700 1.300V6.600H1zM7.400 1.200 14 .2v6.400H7.400zM1 7.300h5.700v5.300L1 11.700zM7.400 7.300H14v6.500l-6.600-1z" /></svg> },
  { open: true, i: <svg width="19" height="17" viewBox="0 0 19 17"><path d="M0 1h7l2 2h9v13H0z" fill="#e9b33a" /><path d="M0 5h19v11H0z" fill="#fbd466" /><path d="M3 9h13v8h-4v-4H7v4H3z" fill="#3b8fd6" /></svg> },
  { i: <svg width="19" height="17" viewBox="0 0 19 17"><path d="M6 1l12 1-4 14-13-2z" fill="#83c7d2" /><path d="M6 1 1 14l5 1L11 1z" fill="#a9dfe4" /><path d="M1 14l13 2 1-3-12-2z" fill="#4d8b94" /><path d="M8 4l8 1M7 7l8 1" stroke="#d9f3f5" /></svg> },
  { i: <svg width="19" height="15" viewBox="0 0 19 15"><rect x=".5" y=".5" width="18" height="14" fill="#101010" stroke="#aaa" /><path d="M1 1h17v2H1z" fill="#ccc" /><path d="M3 5l2 1-2 1M6 8h3" stroke="#ddd" fill="none" /></svg> },
  { i: <svg width="22" height="20" viewBox="0 0 22 20"><path d="M9 3H2v10h17v-2" fill="none" stroke="#fff" strokeWidth="1.600" /><path d="M8 17h7M11.500 13v4" stroke="#fff" strokeWidth="1.600" /><ellipse cx="15" cy="5.500" rx="6.500" ry="5" fill="#fff" /><path d="M10 8l-1 5 5-3z" fill="#fff" /></svg> },
  { i: <svg width="21" height="18" viewBox="0 0 21 18"><path d="M5 1h15v12H5z" fill="#2f9fe6" /><path d="M5 1h15L6 12z" fill="#5dbdf3" opacity=".7" /><circle cx="6" cy="11" r="4.500" fill="#b7dff5" stroke="#8aa7b8" opacity=".9" /><path d="M9 14l3 4" stroke="#bbb" strokeWidth="2" /></svg> },
  { i: <svg width="18" height="18" viewBox="0 0 18 18"><circle cx="9" cy="9" r="7.500" fill="#15a7e8" /><circle cx="5" cy="5" r="4.500" fill="#15a7e8" /><circle cx="13" cy="13" r="4.500" fill="#15a7e8" /><circle cx="9" cy="9" r="6" fill="#fff" /><text x="9" y="13" textAnchor="middle" fontSize="11" fontWeight="bold" fill="#15a7e8" fontFamily="Liberation Sans">S</text></svg> },
  { i: <svg width="20" height="17" viewBox="0 0 20 17"><path d="M5 2h13v10H5z" fill="#c4cdd3" /><path d="M1 6h11v8H1z" fill="#97a3aa" /><path d="M6 8l3-3 2 3 3-3 3 4" fill="none" stroke="#44607a" strokeWidth=".9" /><path d="M2 14l12 2 4-4" fill="#e5e9eb" /></svg> },
  { open: true, i: <svg width="18" height="17" viewBox="0 0 18 17"><path d="M0 0h18v17H0z" fill="#fbd01c" /><path d="M9 17V10l9-1v1l-7 7z" fill="#3d3a22" /><path d="M11 17l7-7v7z" fill="#171510" /></svg> },
  { open: true, active: true, i: <F s={20} /> },
];

export default function App() {
  return (
    <Desktop>
      <Global />
      <WindowWrap>
        <AppWindow>
          <TitleBar>
            <F s={14} /><TitleText>Autodesk Fusion 360 (Education License)</TitleText>
            <WindowButtons>
              <svg width="9" height="9" viewBox="0 0 9 9"><path d="M1 4.500h7" stroke="#ff9aa4" /></svg>
              <svg width="9" height="9" viewBox="0 0 9 9"><rect x=".5" y=".5" width="7.500" height="7.500" fill="none" stroke="#fff" /></svg>
              <svg width="9" height="9" viewBox="0 0 9 9"><path d="M.5.5l8 8M8.500.5l-8 8" stroke="#fff" /></svg>
            </WindowButtons>
          </TitleBar>
          <TabStrip>
            <QuickBar>
              <Slot $w={13}><svg width="12" height="12" viewBox="0 0 12 12" fill="#666"><path d="M0 0h3v3H0zM4.500 0h3v3h-3zM9 0h3v3H9zM0 4.500h3v3H0zM4.500 4.500h3v3h-3zM9 4.500h3v3H9zM0 9h3v3H0zM4.500 9h3v3h-3zM9 9h3v3H9z" /></svg></Slot>
              <Slot $w={41}><svg width="11" height="13" viewBox="0 0 11 13" fill="#666"><path d="M0 0h7v4h4v9H0z" /><path d="M8 0l3 3H8z" /></svg></Slot>
              <Slot $w={0}><Caret $c="#666" $pull /></Slot>
              <Slot $w={36}><svg width="12" height="12" viewBox="0 0 12 12"><path d="M0 0h12v12H0z" fill="#666" /><path d="M3 1h6v3.500H3zM2.500 6.500h7V11h-7z" fill="#cbcbcb" /><path d="M7 1.500h1.500V4H7zM3.500 8h5M3.500 9.500h5" fill="#666" stroke="#666" strokeWidth=".7" /></svg></Slot>
              <Slot $w={20}><svg width="12" height="11" viewBox="0 0 12 11"><path d="M4.500 0v8L0 4z" fill="#666" /><path d="M3 4q7-1 7.500 6.500" fill="none" stroke="#666" strokeWidth="1.700" /></svg></Slot>
              <Slot $w={9}><Caret $c="#666" /></Slot>
              <Slot $w={25} $o={0.45}><svg width="12" height="11" viewBox="0 0 12 11"><path d="M7.500 0v8L12 4z" fill="#666" /><path d="M9 4Q2 3 1.500 10.500" fill="none" stroke="#666" strokeWidth="1.700" /></svg></Slot>
              <Slot $w={5} $o={0.45}><Caret $c="#666" /></Slot>
            </QuickBar>
            <DocTab>
              <svg width="14" height="13" viewBox="0 0 14 13"><path d="M0 2 8 0l6 2v8l-6 3-8-3z" fill="#555" /><path d="M0 2l8 1.500V13l-8-3z" fill="#8d8d8d" /><path d="M0 2 8 0l6 2-6 1.500z" fill="#444" /></svg>
              <span>card v5*</span>
              <CloseTab><svg width="8" height="8" viewBox="0 0 8 8"><path d="M.5.5l7 7M7.500.5l-7 7" stroke="#555" strokeWidth="1.200" /></svg></CloseTab>
            </DocTab>
            <AccountBar>
              <NewTab><svg width="11" height="11" viewBox="0 0 11 11"><path d="M5.500 0v11M0 5.500h11" stroke="#777" strokeWidth="2" /></svg></NewTab>
              <Slot $w={27.5}><svg width="14" height="14" viewBox="0 0 14 14"><circle cx="7" cy="7" r="6.500" fill="#5a5a5a" /><path d="M3.500 9V6.500L5.500 4l2 1L10 3.500l.5 3.500-1 3-3 1z" fill="#cbcbcb" /></svg></Slot>
              <Slot $w={27.5}><svg width="14" height="14" viewBox="0 0 14 14"><circle cx="7" cy="7" r="6.500" fill="#5a5a5a" /><circle cx="7" cy="7" r="4" fill="none" stroke="#8d8d8d" /><path d="M7 4v3.500h4" stroke="#d5d5d5" strokeWidth="1.500" fill="none" /></svg></Slot>
              <Slot $w={27.5}><svg width="12" height="14" viewBox="0 0 12 14" fill="#5a5a5a"><path d="M6 0q4 1 4 6 0 3 2 4.500H0Q2 9 2 6 2 1 6 0zM4 11.500h4q0 2-2 2t-2-2z" /></svg></Slot>
              <Slot $w={27.5}><svg width="14" height="14" viewBox="0 0 14 14"><circle cx="7" cy="7" r="6.500" fill="#5a5a5a" /><path d="M4.800 5.300Q5 3.300 7 3.300t2.200 1.900Q9.200 6.500 7 7.300v1.200M7 9.700v1.500" fill="none" stroke="#eee" strokeWidth="1.500" /></svg></Slot>
              <Avatar>GA</Avatar>
            </AccountBar>
          </TabStrip>
          <Ribbon>
            <DesignButton>DESIGN <Caret /></DesignButton>
            <RibbonBody>
              <Tabs><Tab $w={45} $active>SOLID</Tab><Tab $w={98}>SURFACE</Tab><Tab $w={74}>SHEET METAL</Tab><Tab $w={87}>TOOLS</Tab></Tabs>
              <Groups>
                {groups.map((g) => (
                  <Group key={g.name} $w={g.w} $last={g.name === "SELECT"}>
                    <GroupIcons>{g.icons.map((ic, i) => <IconCell key={i}>{ic}</IconCell>)}</GroupIcons>
                    <GroupLabel>{g.name}<Caret /></GroupLabel>
                  </Group>
                ))}
              </Groups>
            </RibbonBody>
          </Ribbon>
          <Viewport>
            <Scene />
            <Browser />
            <FloatInput><Grip /><FloatField>-90.0 deg</FloatField><Slot $w={22}><svg width="2" height="12" viewBox="0 0 2 12" fill="#666"><path d="M0 0h2v2H0zM0 5h2v2H0zM0 10h2v2H0z" /></svg></Slot><Slot $w={20}><Pivot /></Slot></FloatInput>
            <MovePanel />
            <Hint>Select bodies to move</Hint>
            <Navigation />
            <StatusName>Body4</StatusName>
          </Viewport>
          <Timeline>
            <ScrollTrack><ScrollThumb /></ScrollTrack>
            <TimelineRow>
              <Playback>{["first", "prev", "play", "next", "last"].map((k) => <Slot key={k} $w={20.7}><Play kind={k} /></Slot>)}</Playback>
              <Features>
                {history.map((k, i) => <Feature key={i}>{featureIcons[k]}</Feature>)}
                <Marker><svg width="10" height="28" viewBox="0 0 10 28"><path d="M0 2h10v4L6 9v19H4V9L0 6z" fill="#555" /></svg></Marker>
                {[0, 1, 2, 3, 4].map((i) => <Feature key={i} $off><Extrude /></Feature>)}
              </Features>
              <Slot $w={37} $h={37}><Gear s={14} /></Slot>
            </TimelineRow>
          </Timeline>
        </AppWindow>
      </WindowWrap>
      <Taskbar>
        {taskIcons.map((t, i) => <Task key={i} $open={t.open} $active={t.active}>{t.i}</Task>)}
        <Tray>
          <Slot $w={20}><svg width="11" height="7" viewBox="0 0 11 7"><path d="M.5 6 5.500 1l5 5" fill="none" stroke="#eee" strokeWidth="1.200" /></svg></Slot>
          <Slot $w={20}><svg width="12" height="12" viewBox="0 0 12 12"><circle cx="6" cy="6" r="6" fill="#5d9fc4" /><path d="M2 3q4-4 6-1L6 6 3 7zM7 7l4-1-2 5z" fill="#5cab59" /><path d="M1 8q4-1 6 3-4 1-6-3z" fill="#dfeff5" /></svg></Slot>
          <Slot $w={20}><svg width="14" height="9" viewBox="0 0 14 9"><path d="M3 8.500a3 3 0 0 1 0-5 4 4 0 0 1 7-.5 3 3 0 0 1 1.500 5.500z" fill="#e9e9e9" /></svg></Slot>
          <Slot $w={20}><svg width="14" height="9" viewBox="0 0 14 9"><rect x="3" y="1.500" width="9" height="6" fill="#eee" stroke="#fff" /><path d="M13 3h1v3h-1zM0 1h4v3H0z" fill="#fff" /></svg></Slot>
          <Slot $w={20}><svg width="12" height="12" viewBox="0 0 12 12" fill="none" stroke="#ccc"><path d="M1 11Q2 2 11 1M4 11q1-6 7-7M7 11q1-3 4-4" /><circle cx="10" cy="10.500" r="1" fill="#ccc" /></svg></Slot>
          <Slot $w={20}><svg width="13" height="10" viewBox="0 0 13 10" fill="none" stroke="#eee"><path d="M.5 3.500H2.500L5.500.8v8.400L2.500 6.500H.5zM8 3l4 4M12 3 8 7" /></svg></Slot>
          <Language $w={30}>ENG</Language>
          <Clock>7:51 PM<br />2/7/2021</Clock>
          <Slot $w={24}><svg width="14" height="13" viewBox="0 0 14 13"><path d="M.5.5h13v10H9l-2 2-2-2H.5z" fill="none" stroke="#eee" /></svg></Slot>
        </Tray>
      </Taskbar>
    </Desktop>
  );
}
